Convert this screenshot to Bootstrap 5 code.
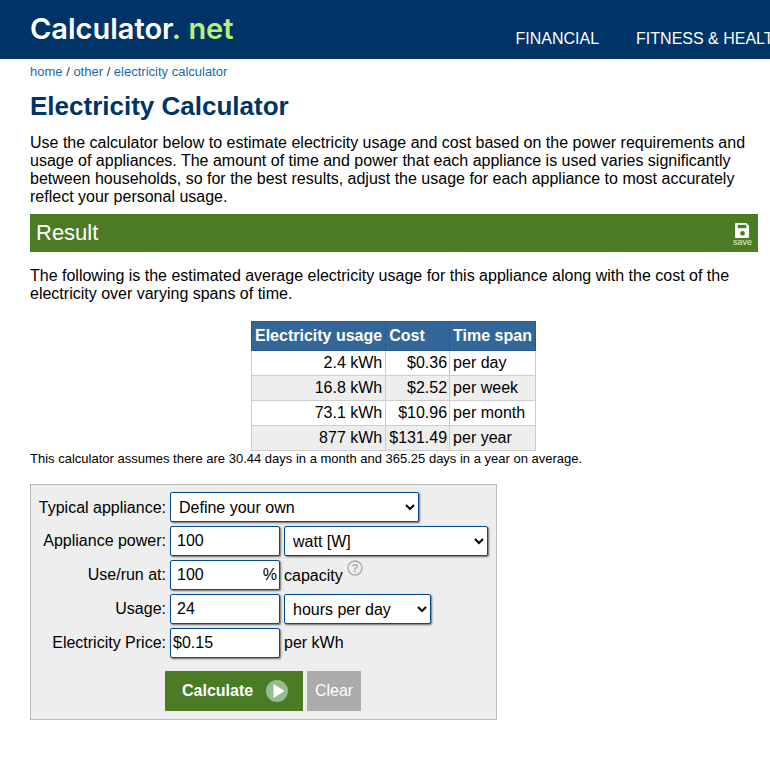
<!DOCTYPE html>
<html lang="en">
<head>
    <meta charset="UTF-8">
    <meta name="viewport" content="width=device-width, initial-scale=1">
    <title>Electricity Calculator</title>
    <link href="https://cdn.jsdelivr.net/npm/bootstrap@5.3.3/dist/css/bootstrap.min.css" rel="stylesheet">
    <style>
        body { background: #fff; color: #000; font-family: "Liberation Sans", Arial, sans-serif; font-size: 16px; overflow-x: hidden; }
        .top-bar { background: #003366; height: 59px; padding-left: 30px; overflow: hidden; white-space: nowrap; }
        .site-logo { font-family: Inter, "Noto Sans", sans-serif; font-size: 29px; font-weight: 600; color: #fff; line-height: 57px; width: 485.5px; flex: none; }
        .site-logo span { color: #b8f07a; }
        .top-menu { color: #fff; font-size: 16px; line-height: 19px; padding-top: 29px; gap: 37px; }
        .page-body { padding: 0 12px 0 30px; }
        .crumbs { font-size: 13px; line-height: 14px; padding-top: 6px; color: #333; }
        .crumbs a { color: #1b6aa5; text-decoration: none; }
        .page-title { color: #003366; font-size: 26px; font-weight: 700; line-height: 30px; margin: 12px 0 13px; }
        .intro { line-height: 18px; margin: 0 0 8px; }
        .result-bar { background: #4c7b25; color: #fff; height: 38px; font-size: 22px; line-height: 37px; padding: 0 6px; }
        .save-btn { color: #e6f5c8; font-size: 9px; line-height: 9px; text-align: center; padding-top: 9px; }
        .save-btn svg { display: block; margin: 0 auto; }
        .result-text { line-height: 18px; margin: 15px 0 18px; }
        .usage-table { border-collapse: collapse; width: 285px; margin: 0 0 0 221px; line-height: 18px; }
        .usage-table th { background: #336699; color: #fff; font-weight: 700; padding: 5px 3px 5px; border: 1px solid #2a5a8a; }
        .usage-table td { padding: 3px 3px 3px; border: 1px solid #cccccc; }
        .usage-table th:nth-child(2), .usage-table td:nth-child(2) { padding-right: 2px; }
        .usage-table tr:nth-child(even) td { background: #eeeeee; }
        .assume { font-size: 13px; line-height: 14px; margin: 1px 0 18px; }
        .calc-box { width: 467px; height: 236px; background: #eeeeee; border: 1px solid #bbbbbb; padding: 7px 8px 0 0; }
        .calc-row { height: 30px; margin-bottom: 4px; line-height: 30px; gap: 4px; }
        .calc-label { width: 135px; text-align: right; flex: none; }
        .calc-row:first-child .calc-label { padding-top: 1px; }
        .calc-field { height: 30px; border: 1px solid #044b8f; border-radius: 2px; box-shadow: 1px 1px 2px #6a6a6a; background: #fff; color: #000; font-family: inherit; font-size: 16px; padding: 0 2px 0 6px; outline: none; }
        select.calc-field { padding: 0 0 0 4px; }
        .price-field { padding-left: 2px; }
        .w-input { width: 110px; }
        .pct-wrap { position: relative; width: 110px; }
        .pct-wrap .calc-field { width: 100%; }
        .pct-sign { position: absolute; right: 3px; top: 0; }
        .help-mark { vertical-align: 5px; }
        .calc-actions { padding: 9px 0 0 134px; gap: 4px; }
        .go-btn { background: #4c7b25; color: #fff; font-weight: 700; height: 40px; width: 138px; border: 0; font-size: 16px; padding: 0 0 0 17px; }
        .clear-btn { background: #ababab; color: #fff; height: 40px; width: 54px; border: 0; font-size: 16px; padding: 0; }
    </style>
</head>
<body>
<div class="top-bar d-flex">
    <div class="site-logo">Calculator<span>.&nbsp;net</span></div>
    <div class="top-menu d-flex">
        <div>FINANCIAL</div>
        <div>FITNESS &amp; HEALTH</div>
    </div>
</div>

<div class="page-body">
    <div class="crumbs"><a href="#">home</a> / <a href="#">other</a> / <a href="#">electricity calculator</a></div>
    <h1 class="page-title">Electricity Calculator</h1>
    <p class="intro">Use the calculator below to estimate electricity usage and cost based on the power requirements and usage of appliances. The amount of time and power that each appliance is used varies significantly between households, so for the best results, adjust the usage for each appliance to most accurately reflect your personal usage.</p>

    <div class="result-bar d-flex justify-content-between">
        <div>Result</div>
        <div class="save-btn">
            <svg width="15" height="15" viewBox="0 0 16 16">
                <path fill="#fff" d="M1 0h11l3 3v12a1 1 0 0 1-1 1H1a1 1 0 0 1-1-1V1a1 1 0 0 1 1-1z"/>
                <rect x="3" y="2" width="9" height="3.5" fill="#4c7b25"/>
                <circle cx="8" cy="11" r="2.5" fill="#4c7b25"/>
            </svg>
            save
        </div>
    </div>

    <p class="result-text">The following is the estimated average electricity usage for this appliance along with the cost of the electricity over varying spans of time.</p>

    <table class="usage-table">
        <thead>
            <tr><th>Electricity usage</th><th>Cost</th><th>Time span</th></tr>
        </thead>
        <tbody>
            <tr><td class="text-end">2.4 kWh</td><td class="text-end">$0.36</td><td>per day</td></tr>
            <tr><td class="text-end">16.8 kWh</td><td class="text-end">$2.52</td><td>per week</td></tr>
            <tr><td class="text-end">73.1 kWh</td><td class="text-end">$10.96</td><td>per month</td></tr>
            <tr><td class="text-end">877 kWh</td><td class="text-end">$131.49</td><td>per year</td></tr>
        </tbody>
    </table>
    <div class="assume">This calculator assumes there are 30.44 days in a month and 365.25 days in a year on average.</div>

    <form class="calc-box" onsubmit="return false">
        <div class="calc-row d-flex">
            <div class="calc-label">Typical appliance:</div>
            <select class="calc-field" style="width: 249px"><option>Define your own</option></select>
        </div>
        <div class="calc-row d-flex">
            <div class="calc-label">Appliance power:</div>
            <input class="calc-field w-input" type="text" value="100">
            <select class="calc-field" style="width: 204px"><option>watt [W]</option></select>
        </div>
        <div class="calc-row d-flex">
            <div class="calc-label">Use/run at:</div>
            <div class="pct-wrap">
                <input class="calc-field" type="text" value="100">
                <span class="pct-sign">%</span>
            </div>
            <div>capacity
                <svg class="help-mark" width="16" height="16" viewBox="0 0 16 16">
                    <circle cx="8" cy="8" r="7" fill="none" stroke="#aaa" stroke-width="1.3"/>
                    <text x="8" y="12" text-anchor="middle" font-size="11" font-weight="700" fill="#aaa" font-family="Liberation Sans, sans-serif">?</text>
                </svg>
            </div>
        </div>
        <div class="calc-row d-flex">
            <div class="calc-label">Usage:</div>
            <input class="calc-field w-input" type="text" value="24">
            <select class="calc-field" style="width: 147px"><option>hours per day</option></select>
        </div>
        <div class="calc-row d-flex">
            <div class="calc-label">Electricity Price:</div>
            <input class="calc-field w-input price-field" type="text" value="$0.15">
            <div>per kWh</div>
        </div>
        <div class="calc-actions d-flex">
            <button class="go-btn d-flex align-items-center gap-2" type="submit">Calculate
                <svg class="ms-1" width="24" height="24" viewBox="0 0 24 24">
                    <circle cx="12" cy="12" r="11" fill="#97bd8f"/>
                    <path fill="#fff" d="M8.5 5l11 7-11 7z"/>
                </svg>
            </button>
            <button class="clear-btn" type="reset">Clear</button>
        </div>
    </form>
</div>

<script src="https://cdn.jsdelivr.net/npm/bootstrap@5.3.3/dist/js/bootstrap.bundle.min.js"></script>
</body>
</html>
